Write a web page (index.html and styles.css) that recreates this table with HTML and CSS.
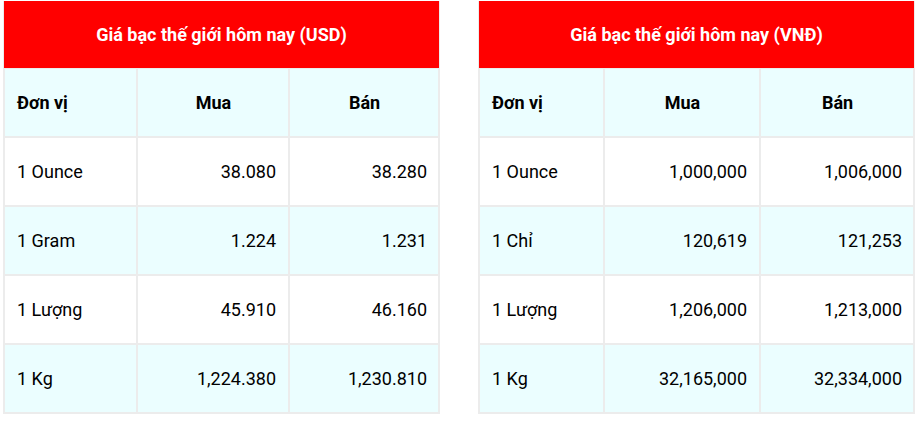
FILE: index.html
```html
<!DOCTYPE html>
<html lang="vi">
<head>
<meta charset="utf-8">
<link rel="stylesheet" href="styles.css">
</head>
<body>
<div class="wrap">
  <table class="price usd">
    <colgroup><col class="c1"><col class="c2"><col class="c3"></colgroup>
    <tr><th class="title" colspan="3">Giá bạc thế giới hôm nay (USD)</th></tr>
    <tr class="alt"><th class="left">Đơn vị</th><th>Mua</th><th>Bán</th></tr>
    <tr><td class="left">1 Ounce</td><td class="mid">38.080</td><td>38.280</td></tr>
    <tr class="alt"><td class="left">1 Gram</td><td class="mid">1.224</td><td>1.231</td></tr>
    <tr><td class="left">1 Lượng</td><td class="mid">45.910</td><td>46.160</td></tr>
    <tr class="alt"><td class="left">1 Kg</td><td class="mid">1,224.380</td><td>1,230.810</td></tr>
  </table>
  <table class="price vnd">
    <colgroup><col class="c1"><col class="c2"><col class="c3"></colgroup>
    <tr><th class="title" colspan="3">Giá bạc thế giới hôm nay (VNĐ)</th></tr>
    <tr class="alt"><th class="left">Đơn vị</th><th>Mua</th><th>Bán</th></tr>
    <tr><td class="left">1 Ounce</td><td class="mid">1,000,000</td><td>1,006,000</td></tr>
    <tr class="alt"><td class="left">1 Chỉ</td><td class="mid">120,619</td><td>121,253</td></tr>
    <tr><td class="left">1 Lượng</td><td class="mid">1,206,000</td><td>1,213,000</td></tr>
    <tr class="alt"><td class="left">1 Kg</td><td class="mid">32,165,000</td><td>32,334,000</td></tr>
  </table>
</div>
</body>
</html>
```
FILE: styles.css
```css
html, body {
  margin: 0;
  padding: 0;
  background: #fff;
}
body {
  font-family: Roboto, "Liberation Sans", Arial, sans-serif;
  font-size: 18px;
  color: #000;
}
.wrap {
  display: flex;
  gap: 38px;
  padding: 1px 0 0 3px;
  align-items: flex-start;
}
.price {
  border-collapse: separate;
  border-spacing: 0;
  border: 1px solid #ececec;
  border-top: none;
  table-layout: fixed;
  width: 437px;
}
.usd .c1 { width: 133px; }
.usd .c2 { width: 152px; }
.usd .c3 { width: 150px; }
.vnd .c1 { width: 125px; }
.vnd .c2 { width: 156px; }
.vnd .c3 { width: 154px; }
.price th,
.price td {
  border: 1px solid #ececec;
  padding: 23px 11px 23px 12px;
  line-height: 21px;
  height: 21px;
  text-align: right;
  font-weight: 400;
}
.price td.mid {
  padding-right: 12px;
}
.price th {
  font-weight: 700;
  text-align: center;
}
.price .left {
  text-align: left;
}
.price th.title {
  background: #ff0000;
  color: #fff;
  border: none;
  padding: 0;
  height: 67px;
}
.alt th, .alt td {
  background: #ebfeff;
}
```
